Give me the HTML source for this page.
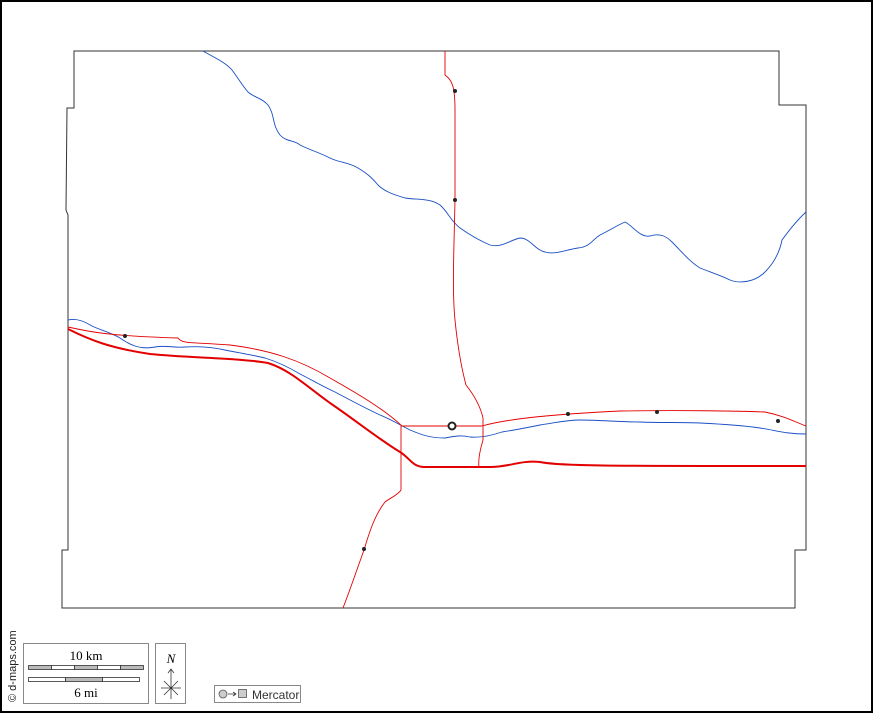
<!DOCTYPE html>
<html><head><style>
html,body{margin:0;padding:0;background:#fff}
body{width:873px;height:713px;overflow:hidden;position:relative;font-family:"Liberation Serif",serif}
.frame{position:absolute;left:0;top:0;width:869px;height:709px;border:2px solid #000}
</style></head><body>
<div class="frame"></div>
<svg width="873" height="713" style="position:absolute;left:0;top:0">
<path d="M74,51 L779,51 L779,105 L806,105 L806,550 L795,550 L795,608 L62,608 L62,550 L68,550 L68,215 L66,210 L67,108 L74,108 Z" fill="none" stroke="#333" stroke-width="1"/>
<g fill="none" stroke="#1a4fc4" stroke-width="0.9">
<path d="M203,51 C215,58 225,62 232,70 C238,78 242,85 248,92 C255,98 262,98 268,105 C275,115 272,125 280,135 C286,142 295,140 300,145 C310,150 318,152 330,158 C340,163 348,162 358,168 C368,174 372,178 378,185 C385,192 395,195 405,198 C418,200 430,198 440,205 C448,212 450,220 460,228 C470,235 478,240 490,245 C502,248 510,240 520,238 C530,238 535,250 545,252 C555,255 565,250 578,248 C590,247 592,240 600,235 C610,230 618,225 625,222 C632,225 640,238 650,236 C660,233 666,236 672,242 C682,252 690,262 700,268 C710,272 720,275 730,280 C740,284 755,282 765,272 C775,262 780,250 782,240 C788,232 795,222 806,212"/>
<path d="M68,320 C78,318 85,322 92,326 C100,330 110,332 120,338 C130,345 140,350 155,347 C165,345 175,348 185,347 C200,346 212,347 225,350 C240,353 252,355 265,358 C278,362 290,368 300,374 C312,380 320,385 335,392 C350,400 365,408 380,415 C392,420 400,425 410,430 C422,435 430,438 445,438 C455,436 462,435 470,437 C480,438 490,436 502,432 C515,430 525,428 540,425 C555,423 565,420 580,420 C600,420 620,422 640,422 C660,423 680,422 700,423 C720,424 740,425 760,428 C775,430 785,434 806,434"/>
</g>
<g fill="none" stroke="#e30000">
<path d="M68,329 C90,340 110,348 150,354 C190,358 240,358 268,363 C290,370 305,385 330,403 C355,420 380,440 400,452 C410,458 412,467 425,467 L490,467 C510,467 520,460 540,462 C560,466 600,466 806,466" stroke-width="2"/>
<path d="M68,327 C90,332 110,336 178,338 C182,344 190,342 230,345 C270,350 300,360 330,378 C360,395 385,410 402,426 L482,426 C510,418 560,414 620,411 C680,410 740,411 765,412 C785,416 795,422 806,426" stroke-width="0.9"/>
<path d="M445,51 L445,75 C452,80 455,86 455,110 L455,200 C454,250 452,290 455,320 C458,350 462,370 466,385 C474,395 480,405 483,418 L483,440 C480,450 478,460 479,467" stroke-width="0.9"/>
<path d="M401,426 L401,490 C398,495 390,498 385,502 C375,515 370,530 364,550 C355,575 350,590 343,608" stroke-width="0.9"/>
</g>
<g fill="#222">
<circle cx="455" cy="91" r="2"/><circle cx="455" cy="200" r="2"/><circle cx="125" cy="336" r="2"/>
<circle cx="568" cy="414" r="2"/><circle cx="657" cy="412" r="2"/><circle cx="778" cy="421" r="2"/><circle cx="364" cy="549" r="2"/>
</g>
<circle cx="452" cy="426" r="3.5" fill="#fff" stroke="#222" stroke-width="2"/>
<rect x="23.5" y="643.5" width="125" height="60" fill="#fff" stroke="#888"/>
<text x="86" y="660" font-size="13" text-anchor="middle" font-family="Liberation Serif">10 km</text>
<g stroke="#333" stroke-width="0.8">
<rect x="28.5" y="665.5" width="23" height="4" fill="#bbb"/><rect x="51.5" y="665.5" width="23" height="4" fill="#fff"/><rect x="74.5" y="665.5" width="23" height="4" fill="#bbb"/><rect x="97.5" y="665.5" width="23" height="4" fill="#fff"/><rect x="120.5" y="665.5" width="23" height="4" fill="#bbb"/>
<rect x="28.5" y="677.5" width="37" height="4" fill="#fff"/><rect x="65.5" y="677.5" width="37" height="4" fill="#bbb"/><rect x="102.5" y="677.5" width="37" height="4" fill="#fff"/>
</g>
<text x="86" y="697" font-size="13" text-anchor="middle" font-family="Liberation Serif">6 mi</text>
<rect x="155.5" y="643.5" width="30" height="60" fill="#fff" stroke="#888"/>
<text x="171" y="663" font-size="13" font-style="italic" text-anchor="middle" font-family="Liberation Serif">N</text>
<path d="M171,670 L171,699 M168,673 L171,669 L174,673 M161,688 L181,688 M164,681 L178,695 M178,681 L164,695" stroke="#333" stroke-width="0.8" fill="none"/>
<rect x="214.5" y="685.5" width="86" height="17" fill="#fff" stroke="#888"/>
<circle cx="223" cy="694" r="4" fill="#ccc" stroke="#555" stroke-width="0.8"/>
<path d="M228,694 L236,694 M233,692 L236,694 L233,696" stroke="#333" stroke-width="0.8" fill="none"/>
<rect x="238.5" y="689.5" width="8" height="8" fill="#ccc" stroke="#555" stroke-width="0.8"/>
<text x="252" y="699" font-size="12" font-family="Liberation Sans" fill="#333">Mercator</text>
<text transform="translate(16,702) rotate(-90)" font-size="11" font-family="Liberation Sans" fill="#222">© d-maps.com</text>
</svg>
</body></html>
